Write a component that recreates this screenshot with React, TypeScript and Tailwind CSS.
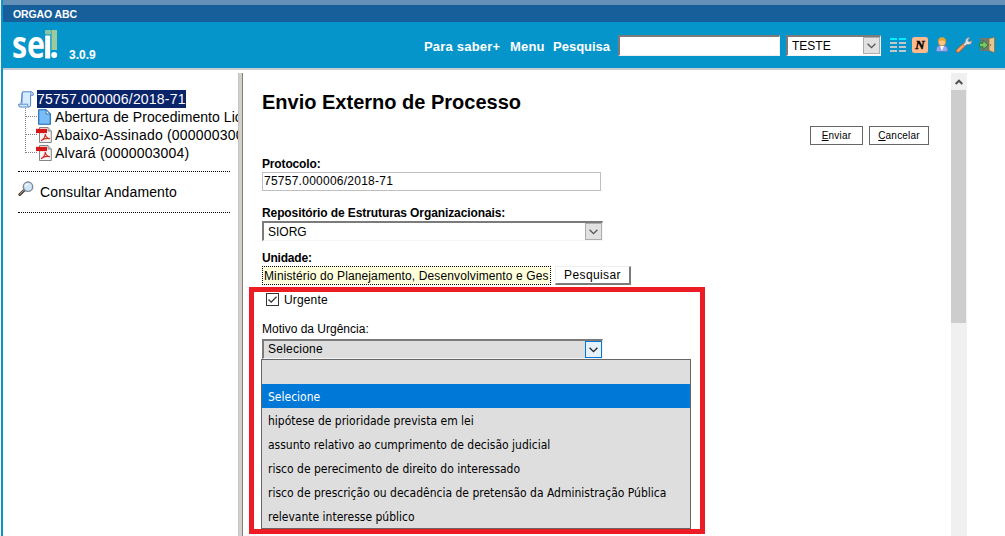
import React from "react";

const Chevron = ({ color = "#555" }: { color?: string }) => (
  <svg width="9" height="6" viewBox="0 0 9 6" fill="none" stroke={color} strokeWidth="1.3">
    <path d="M.6 .8 4.5 4.6 8.4 .8" />
  </svg>
);

function SelectBox({ value, className, active = false }: { value: string; className: string; active?: boolean }) {
  return (
    <div
      className={`flex items-stretch border-t-2 border-l-2 border-r border-b border-t-[#7b7b7b] border-l-[#7b7b7b] border-r-[#f4f4f4] border-b-[#f4f4f4] ${active ? "bg-[#dedede] leading-[17px] tracking-[0.25px]" : "bg-white leading-[18px]"} ${className}`}
    >
      <span className="flex-1 pl-1 text-[12px]/[inherit]">{value}</span>
      <span
        className={`flex h-[17px] w-[17px] items-center justify-center border ${active ? "border-[#0078d7] bg-[#e5f1fb]" : "border-[#adadad] bg-[#e1e1e1]"}`}
      >
        <Chevron color={active ? "#222" : "#555"} />
      </span>
    </div>
  );
}

const Logo = () => (
  <svg width="46" height="30" viewBox="0 0 46 30" className="block overflow-visible">
    <rect x="32" y="0" width="6" height="4.5" rx="1" fill="#8cc6a0" />
    <rect x="38.5" y="0" width="5.5" height="20" fill="#9bcb9c" />
    <text x="-1" y="28.3" fontFamily="Open Sans, sans-serif" fontWeight="700" fontSize="38" fill="#fff" textLength="33" lengthAdjust="spacingAndGlyphs">
      se
    </text>
    <rect x="32.2" y="5.5" width="5" height="23" fill="#fff" />
    <circle cx="41.2" cy="25" r="3" fill="#fff" />
  </svg>
);

const MenuGrid = () => (
  <svg width="16" height="14" viewBox="0 0 16 14" shapeRendering="crispEdges">
    {[0, 4, 8, 12].map((y) => (
      <g key={y} fill={y === 0 ? "#00f0ff" : "#c0c8cc"}>
        <rect x="0" y={y} width="7" height="2" />
        <rect x="9" y={y} width="7" height="2" />
      </g>
    ))}
  </svg>
);

const NIcon = () => (
  <svg width="16" height="16" viewBox="0 0 16 16">
    <rect width="16" height="16" rx="2.5" fill="#ffb98a" />
    <text x="8" y="12.2" textAnchor="middle" fontFamily="Liberation Serif, serif" fontStyle="italic" fontWeight="700" fontSize="13" stroke="#000" strokeWidth=".4">
      N
    </text>
  </svg>
);

const UserIcon = () => (
  <svg width="12" height="16" viewBox="0 0 12 16">
    <path d="M.3 14.6V12Q.8 8.8 4 8.5H8Q11.2 8.8 11.7 12V14.6Z" fill="#8fa8ee" stroke="#5370c5" strokeWidth=".6" />
    <path d="M4 8.8 6 14 8 8.8Z" fill="#fff" />
    <circle cx="6" cy="5" r="3.8" fill="#f9c684" stroke="#c97a20" strokeWidth=".6" />
    <path d="M2.1 4.8Q2 .4 6 .3 10 .4 9.9 4.8 6 2.3 2.1 4.8Z" fill="#e8a52a" />
  </svg>
);

const WrenchIcon = () => (
  <svg width="17" height="16" viewBox="0 0 17 16">
    <path d="M2 13.8 8 8" stroke="#b6551f" strokeWidth="4" strokeLinecap="round" />
    <path d="M2 13.8 8 8" stroke="#ffa566" strokeWidth="2.6" strokeLinecap="round" />
    <path d="M8.2 9.2 7.2 7.8 9.2 5Q8.8 1.5 12.4.5L13.8 .8 11.8 3.2 13.2 4.9 16 3.4Q16.4 7 12.8 7.6L11 7.6Z" fill="#dfe2e5" stroke="#777f86" strokeWidth=".8" />
  </svg>
);

const ExitIcon = () => (
  <svg width="16" height="16" viewBox="0 0 16 16" className="shrink-0">
    <rect x="1.5" y="1" width="9" height="13" fill="#72796d" />
    <path d="M10 1.5 15.5 .3V15.7L10 13.5Z" fill="#e8c58c" stroke="#8a6a3c" strokeWidth=".7" />
    <circle cx="11.5" cy="8" r=".7" fill="#654" />
    <path d="M.5 6.2H4V3.2L9 8 4 12.6V9.7H.5Z" fill="#78c768" stroke="#23752a" strokeWidth=".8" />
  </svg>
);

const ScrollIcon = () => (
  <svg width="16" height="17" viewBox="0 0 16 17">
    <path d="M4.5 .8H13.5Q15.3 1 15.2 3V4.2H12.6V14Q12.5 16 10.6 16H2Q.5 15.8.6 13.2H3Z" fill="#d7ebff" stroke="#4e86c6" />
    <path d="M12.6 4V2.4Q12.8 1 13.7 1M3 13.2H9.6Q9.4 15.8 10.6 16M4 2V12" fill="none" stroke="#4e86c6" strokeWidth=".9" />
  </svg>
);

const DocIcon = () => (
  <svg width="13" height="16" viewBox="0 0 13 16" className="shrink-0">
    <path d="M.7.7H8L12.3 5V15.3H.7Z" fill="#79bdf7" stroke="#1d65ad" strokeWidth="1.1" />
    <path d="M8 .7V5H12.3Z" fill="#e5f4ff" stroke="#1d65ad" strokeWidth=".8" />
  </svg>
);

const PdfIcon = () => (
  <svg width="16" height="16" viewBox="0 0 16 16" className="shrink-0">
    <path d="M3.5.5H12L15.3 4V15.5H3.5Z" fill="#f4f4f4" stroke="#777" strokeWidth=".9" />
    <path d="M12 .5V4H15.3" fill="#ccc" stroke="#777" strokeWidth=".7" />
    <rect x="0" y="1.8" width="11" height="4.3" fill="#d51717" />
    <path d="M5 13.7Q9 11.5 9.3 7 9.5 11 14 11.8 9 10.5 5 13.7Z" fill="none" stroke="#d42a20" strokeWidth="1.1" />
  </svg>
);

const MagnifierIcon = () => (
  <svg width="16" height="16" viewBox="0 0 16 16" className="-mt-[2px]">
    <path d="M1.8 13.5 6 9.5" stroke="#4d443c" strokeWidth="3" strokeLinecap="round" />
    <path d="M1.8 13 5.5 9.6" stroke="#b5927a" strokeWidth="1" strokeLinecap="round" />
    <circle cx="10" cy="5.7" r="4.7" fill="#cfe6fb" stroke="#808a98" strokeWidth="1.4" />
    <path d="M7.3 5.2Q7.8 3 10.2 2.9" fill="none" stroke="#fff" strokeWidth="1.3" />
  </svg>
);

const TreeLine = ({ last = false }: { last?: boolean }) => (
  <svg width="12" height="18" viewBox="0 0 12 18" className="shrink-0" shapeRendering="crispEdges" stroke="#808080" strokeDasharray="1 1">
    <path d={last ? "M.5 0V9" : "M.5 0V18"} />
    <path d="M1 8.5H12" />
  </svg>
);

const documents = [
  { icon: <DocIcon />, label: "Abertura de Procedimento Lic", tracking: "tracking-[0.06px]" },
  { icon: <PdfIcon />, label: "Abaixo-Assinado (0000003003)", tracking: "tracking-[0.19px]" },
  { icon: <PdfIcon />, label: "Alvará (0000003004)", tracking: "tracking-[0.19px]" },
];

const reasons = [
  { label: "", style: "" },
  { label: "Selecione", style: "bg-[#0078d7] text-white" },
  { label: "hipótese de prioridade prevista em lei", style: "" },
  { label: "assunto relativo ao cumprimento de decisão judicial", style: "" },
  { label: "risco de perecimento de direito do interessado", style: "" },
  { label: "risco de prescrição ou decadência de pretensão da Administração Pública", style: "" },
  { label: "relevante interesse público", style: "" },
];

function Header() {
  return (
    <header>
      <div className="h-[5px] bg-[#6591b8]" />
      <div className="h-[17px] bg-[#165f9b] pl-[10px] text-[10.5px] leading-[19px] font-bold tracking-[-0.1px] text-white">ORGAO ABC</div>
      <div className="flex h-[48px] items-start border-b-2 border-[#c9ccd0] bg-[#0695cb] text-white">
        <div className="mt-[8px] ml-[10px] w-[46px]"><Logo /></div>
        <span className="mt-[26px] ml-[10px] text-[12px] leading-[15px] font-bold">3.0.9</span>
        <nav className="mt-[17px] ml-auto flex text-[13px] leading-[16px] font-bold">
          <span className="w-[86px] tracking-[0.2px]">Para saber+</span>
          <span className="w-[43px] tracking-[0.2px]">Menu</span>
          <span className="w-[65px]">Pesquisa</span>
        </nav>
        <div className="mt-[13px] h-[21px] w-[162px] border-t-2 border-l-2 border-r border-b border-[#7b7b7b] border-r-[#eee] border-b-[#eee] bg-white" />
        <SelectBox value="TESTE" className="mt-[13px] ml-[6px] h-[21px] w-[95px] text-black" />
        <div className="mt-[15px] ml-[9px] flex w-[115px] items-start">
          <div className="mt-px h-[14px] w-[22px]"><MenuGrid /></div>
          <div className="w-[24px]"><NIcon /></div>
          <div className="w-[20px]"><UserIcon /></div>
          <div className="w-[23px]"><WrenchIcon /></div>
          <ExitIcon />
        </div>
      </div>
    </header>
  );
}

function Sidebar() {
  return (
    <aside className="w-[235px] overflow-hidden pt-[20px] pl-[15px] text-[14px] leading-[18px] tracking-[0.19px] whitespace-nowrap">
      <div className="flex h-[18px] items-center">
        <div className="w-[19px]"><ScrollIcon /></div>
        <span className="bg-[#0a246a] text-white">75757.000006/2018-71</span>
      </div>
      {documents.map((d, i) => (
        <div key={d.label} className="flex h-[18px] items-center pl-[7px]">
          <TreeLine last={i === documents.length - 1} />
          <span className={i === 0 ? "flex w-[18px] shrink-0 pl-px" : "-ml-px flex w-[19px] shrink-0"}>{d.icon}</span>
          <span className={d.tracking}>{d.label}</span>
        </div>
      ))}
      <div className="mt-[9px] w-[212px] border-t border-dotted border-black" />
      <div className="mt-[11px] flex h-[18px]">
        <div className="w-[22px]"><MagnifierIcon /></div>
        <span className="tracking-[0.12px]">Consultar Andamento</span>
      </div>
      <div className="mt-[11px] w-[212px] border-t border-dotted border-black" />
    </aside>
  );
}

function Form() {
  return (
    <main className="flex w-[708px] flex-col pl-[19px] text-[12px]">
      <h1 className="mt-[20px] h-[24px] text-[20px] leading-[24px] font-bold">Envio Externo de Processo</h1>
      <div className="mt-[12px] flex h-[19px] justify-end gap-[6px] pr-[22px] text-[10px] leading-[18px] tracking-[0.2px]">
        <button className="w-[53px] border border-[#666]"><u>E</u>nviar</button>
        <button className="w-[60px] border border-[#666]"><u>C</u>ancelar</button>
      </div>
      <label className="mt-[11px] h-[16px] leading-[16px] font-bold tracking-[-0.15px]">Protocolo:</label>
      <div className="h-[19px] w-[339px] border border-[#bfbfbf] pl-px leading-[17px] tracking-[0.25px]">75757.000006/2018-71</div>
      <label className="mt-[14px] h-[16px] leading-[16px] font-bold tracking-[-0.1px]">Repositório de Estruturas Organizacionais:</label>
      <SelectBox value="SIORG" className="h-[20px] w-[341px]" />
      <label className="mt-[9px] h-[15px] leading-[16px] font-bold tracking-[-0.2px]">Unidade:</label>
      <div className="flex h-[20px]">
        <div className="mt-px h-[19px] w-[289px] overflow-hidden border border-dotted border-black bg-[#ffffdc] pl-px leading-[18px] tracking-[0.12px] whitespace-nowrap">
          Ministério do Planejamento, Desenvolvimento e Ges
        </div>
        <button className="mt-px ml-[4px] h-[19px] w-[76px] border-t border-r-2 border-b-2 border-l border-t-[#eee] border-r-[#7b7b7b] border-b-[#7b7b7b] border-l-[#eee] leading-[17px] tracking-[0.4px]">
          Pesquisar
        </button>
      </div>
      <div className="relative mt-[7px] flex h-[15px] items-center">
        <svg width="13" height="13" viewBox="0 0 13 13" className="ml-[4px]" fill="none">
          <rect x=".5" y=".5" width="12" height="12" stroke="#333" />
          <path d="M2.5 6.5 5.2 9.2 10.5 3.8" stroke="#333" strokeWidth="1.3" />
        </svg>
        <span className="ml-[5px] tracking-[0.15px]">Urgente</span>
        <div className="pointer-events-none absolute top-[-5px] left-[-13px] h-[247px] w-[456px] border-[5px] border-[#ed1c24]" />
      </div>
      <label className="mt-[14px] h-[17px] leading-[17px]">Motivo da Urgência:</label>
      <SelectBox value="Selecione" active className="mt-[1px] h-[20px] w-[341px]" />
      <ul className="-ml-px h-[170px] w-[430px] border border-[#666] bg-[#dedede] font-['DejaVu_Sans_Condensed','DejaVu_Sans',sans-serif] font-stretch-condensed">
        {reasons.map((r) => (
          <li key={r.label} className={`h-[24px] pl-[6px] text-[12px] leading-[26px] ${r.style}`}>
            {r.label}
          </li>
        ))}
      </ul>
    </main>
  );
}

export default function App() {
  return (
    <div className="h-[536px] w-[1005px] overflow-hidden bg-white pl-px font-['Liberation_Sans',Arial,sans-serif] text-black">
      <div className="h-[536px] border-l-2 border-[#0695cb]">
        <Header />
        <div className="flex h-[466px]">
          <Sidebar />
          <div className="mt-[3px] w-[5px] border-r border-l border-l-[#c4c4c4] border-r-[#808080] bg-[#d4d0c8]" />
          <Form />
          <div className="mt-[3px] w-[16px] bg-[#f0f0f0]">
            <div className="flex h-[17px] items-center justify-center">
              <svg width="8" height="6" viewBox="0 0 8 6" fill="none" stroke="#505050" strokeWidth="2">
                <path d="M.7 5 4 1.7 7.3 5" />
              </svg>
            </div>
            <div className="h-[233px] w-[15px] bg-[#cdcdcd]" />
          </div>
        </div>
      </div>
    </div>
  );
}
